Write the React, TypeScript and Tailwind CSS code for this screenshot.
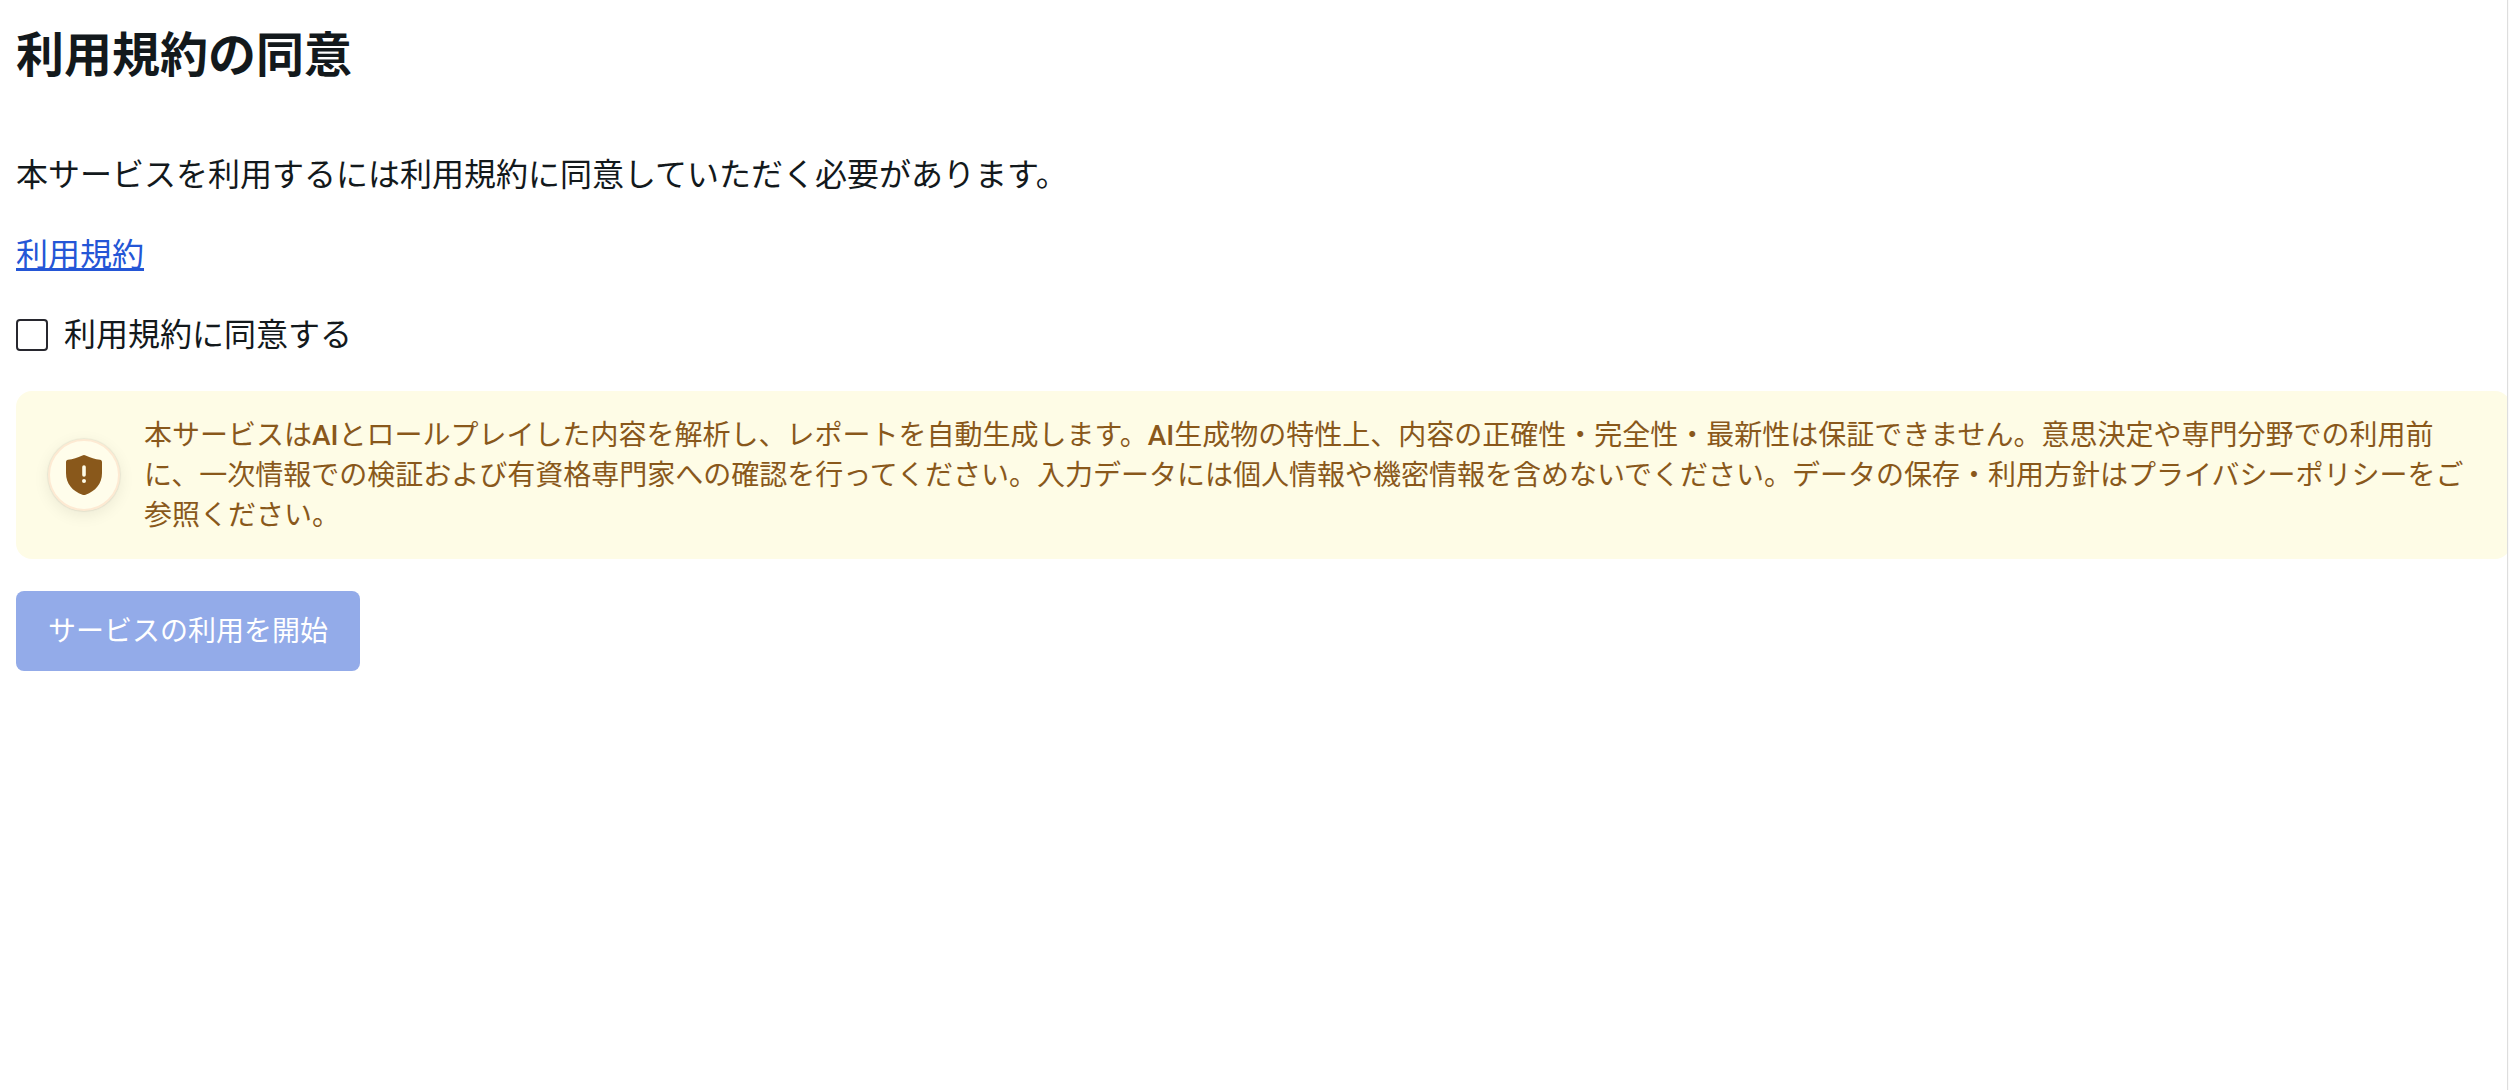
import React, { useState } from "react";

const ShieldAlertIcon: React.FC = () => (
  <svg className="h-10 w-9" viewBox="0 0 36 40" fill="none" aria-hidden="true">
    <path
      d="M16.4.4a4.6 4.6 0 0 1 3.2 0C24.5 2.6 29 3.9 34 4.8c1.2.3 2 1.1 2 2.4V18c0 11-6.6 18.1-16.4 21.7a4.6 4.6 0 0 1-3.2 0C6.6 36.1 0 29 0 18V7.2c0-1.3.8-2.1 2-2.4C7 3.9 11.5 2.6 16.4.4Z"
      fill="#89581b"
    />
    <path d="M18 12v8" stroke="#fefce8" strokeWidth="3.6" strokeLinecap="round" />
    <circle cx="18" cy="26" r="2" fill="#fefce8" />
  </svg>
);

const Latin: React.FC<{ children: React.ReactNode }> = ({ children }) => (
  <span className="font-['Roboto',sans-serif] leading-none font-medium">{children}</span>
);

const Notice: React.FC = () => (
  <div className="-mr-1 flex items-center gap-6 rounded-2xl bg-[#fefce6] px-8 py-6 text-[#89581b]">
    <div className="flex size-18 shrink-0 items-center justify-center rounded-full border-2 border-[#fdead3] bg-[#fffdeb] shadow-[0_4px_16px_rgba(0,0,0,0.08),0_0_1px_1px_rgba(0,0,0,0.06)]">
      <ShieldAlertIcon />
    </div>
    <p className="text-[28px] leading-10">
      本サービスは<Latin>AI</Latin>
      とロールプレイした内容を解析し、レポートを自動生成します。
      <Latin>AI</Latin>
      生成物の特性上、内容の正確性・完全性・最新性は保証できません。意思決定や専門分野での利用前に、一次情報での検証および有資格専門家への確認を行ってください。入力データには個人情報や機密情報を含めないでください。データの保存・利用方針はプライバシーポリシーをご参照ください。
    </p>
  </div>
);

export default function App() {
  const [agreed, setAgreed] = useState<boolean>(false);

  return (
    <div
      lang="ja"
      className="flex min-h-screen bg-[#fafafa] pr-px font-['Inter','Noto_Sans_CJK_JP',sans-serif] text-[#13191c]"
    >
      <main className="flex min-w-0 flex-1 flex-col items-start gap-8 overflow-hidden border-r border-[#dedede] bg-white pt-[19px] pl-4">
        <h1 className="mb-7 text-5xl leading-[72px] font-bold">利用規約の同意</h1>
        <p className="text-[32px] leading-12">
          本サービスを利用するには利用規約に同意していただく必要があります。
        </p>
        <a href="#terms" className="text-[32px] leading-12 text-[#2456d6] underline">
          利用規約
        </a>
        <label className="flex items-center gap-4 text-[32px] leading-12">
          <input
            type="checkbox"
            checked={agreed}
            onChange={(e) => setAgreed(e.target.checked)}
            className="size-8 appearance-none rounded border-2 border-[#27272e] bg-white checked:bg-[#2456d6]"
          />
          利用規約に同意する
        </label>
        <Notice />
        <button
          type="button"
          disabled={!agreed}
          className="rounded-lg bg-[#2456d6] px-8 py-5 text-[28px] leading-10 text-white disabled:bg-[#93abe9]"
        >
          サービスの利用を開始
        </button>
      </main>
    </div>
  );
}
